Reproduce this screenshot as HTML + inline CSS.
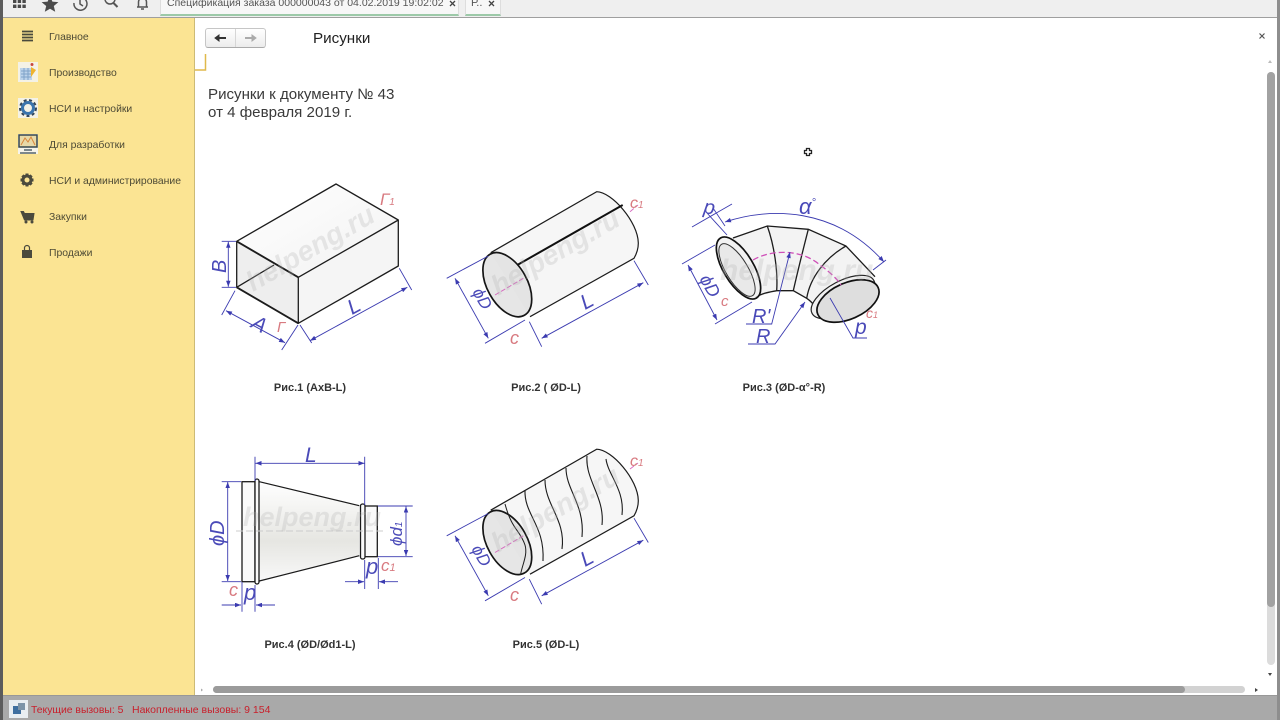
<!DOCTYPE html>
<html lang="ru"><head><meta charset="utf-8"><title>Рисунки</title>
<style>
html,body{margin:0;padding:0;width:1280px;height:720px;overflow:hidden;background:#fff;font-family:"Liberation Sans","Noto Sans CJK SC",sans-serif}
div{position:absolute;box-sizing:border-box}
.t{white-space:nowrap}
.m{left:49px;font-size:10.4px;line-height:14px;color:#4d4a35}
.cap{font-size:11px;font-weight:bold;color:#333;line-height:14px;text-align:center;white-space:nowrap}
svg{position:absolute;left:0;top:0}
</style></head><body>
<div style="left:0;top:0;width:1280px;height:18px;background:#efefef;border-bottom:1px solid #9f9f9f"></div>
<div style="left:3px;top:18px;width:192px;height:677px;background:#fbe493;border-right:1px solid #cdbb76"></div>
<div style="left:160px;top:-2px;width:299px;height:18px;background:#f7f7f7;border-bottom:2px solid #9cc9a8;border-left:1px solid #ddd;border-right:1px solid #ddd"></div>
<div style="left:465px;top:-2px;width:36px;height:18px;background:#f7f7f7;border-bottom:2px solid #9cc9a8;border-left:1px solid #ddd;border-right:1px solid #ddd"></div>
<div class="t" style="left:167px;top:-4px;font-size:10.5px;line-height:14px;color:#555">Спецификация заказа 000000043 от 04.02.2019 19:02:02</div>
<div class="t" style="left:471px;top:-4px;font-size:11px;line-height:14px;color:#555">Р..</div>
<div class="t m" style="top:31px">Главное</div>
<div class="t m" style="top:67px">Производство</div>
<div class="t m" style="top:103px">НСИ и настройки</div>
<div class="t m" style="top:139px">Для разработки</div>
<div class="t m" style="top:175px">НСИ и администрирование</div>
<div class="t m" style="top:211px">Закупки</div>
<div class="t m" style="top:247px">Продажи</div>
<div style="left:204.500px;top:28px;width:61px;height:20px;border:1px solid #c6c6c6;border-bottom-color:#aaa;border-radius:3px;background:linear-gradient(#fff,#ececec)"></div>
<div style="left:235px;top:29px;width:1px;height:18px;background:#d6d6d6"></div>
<div class="t" style="left:313px;top:30px;font-size:15.200px;line-height:18px;color:#222">Рисунки</div>
<div class="t" style="left:208px;top:86px;font-size:15.100px;line-height:18px;color:#3a3a3a">Рисунки к документу № 43<br>от 4 февраля 2019 г.</div>
<div class="cap" style="left:210px;top:381px;width:200px">Рис.1 (АхВ-L)</div>
<div class="cap" style="left:446px;top:381px;width:200px">Рис.2 ( ØD-L)</div>
<div class="cap" style="left:684px;top:381px;width:200px">Рис.3 (ØD-α°-R)</div>
<div class="cap" style="left:210px;top:638px;width:200px">Рис.4 (ØD/Ød1-L)</div>
<div class="cap" style="left:446px;top:638px;width:200px">Рис.5 (ØD-L)</div>
<div style="left:0;top:695px;width:1280px;height:25px;background:#a9a9a9;border-top:1px solid #989898"></div>
<div style="left:0;top:0;width:3px;height:720px;background:#5c5c5c"></div>
<div style="left:1277px;top:0;width:3px;height:720px;background:#8e8e8e"></div>
<div class="t" style="left:31px;top:704px;font-size:10.400px;line-height:14px;color:#c8202c">Текущие вызовы: 5</div>
<div class="t" style="left:132px;top:703px;font-size:10.500px;line-height:14px;color:#c8202c">Накопленные вызовы: 9 154</div>
<div style="left:213px;top:686px;width:1032px;height:7px;border-radius:4px;background:#d2d2d2"></div>
<div style="left:213px;top:686px;width:972px;height:7px;border-radius:4px;background:#9b9b9b"></div>
<div style="left:1267px;top:72px;width:8px;height:593px;border-radius:4px;background:#dcdcdc"></div>
<div style="left:1267px;top:72px;width:8px;height:535px;border-radius:4px;background:#a2a2a2"></div>

<svg width="1280" height="720" viewBox="0 0 1280 720" font-family="Liberation Sans, sans-serif">
<defs>
<linearGradient id="g1" x1="0" y1="0" x2="1" y2="1"><stop offset="0" stop-color="#fff"/><stop offset="1" stop-color="#e9e9e9"/></linearGradient>
<linearGradient id="g4" x1="0" y1="0" x2="0" y2="1"><stop offset="0" stop-color="#fff"/><stop offset=".6" stop-color="#e6e6e2"/><stop offset="1" stop-color="#f8f8f8"/></linearGradient>
<marker id="a" viewBox="0 0 8 6" refX="8" refY="3" markerWidth="7" markerHeight="5" orient="auto-start-reverse"><path d="M0 0L8 3L0 6z" fill="#3b3bb0"/></marker>
</defs>

<!-- top bar icons -->
<g fill="#4b4b4b">
<g><rect x="13" y="0" width="3.400" height="3"/><rect x="17.700" y="0" width="3.400" height="3"/><rect x="22.400" y="0" width="3.400" height="3"/><rect x="13" y="4.600" width="3.400" height="3.400"/><rect x="17.700" y="4.600" width="3.400" height="3.400"/><rect x="22.400" y="4.600" width="3.400" height="3.400"/></g>
<path d="M50-3l2.400 5.600 6 .5-4.600 3.900 1.400 5.800-5.200-3.100-5.200 3.100 1.400-5.800-4.600-3.900 6-.5z" transform="translate(0 -1)"/>
</g>
<g fill="none" stroke="#555" stroke-width="1.500">
<path d="M74 3a6.500 6.500 0 1 0 2-4M80 0v4l3 2"/>
<circle cx="110" cy="-1" r="5"/><path d="M113.500 3l4 4" stroke-width="2"/>
<path d="M137 7h11M138.500 7v-5a4 4 0 0 1 8 0v5M141 9h3"/>
<path d="M450 1l5 5M455 1l-5 5M489 1l5 5M494 1l-5 5" stroke="#444" stroke-width="1.300"/>
</g>

<!-- sidebar icons -->
<path d="M22 31.500h11M22 34.500h11M22 37.500h11M22 40.500h11" stroke="#4a4a3c" stroke-width="1.800"/>
<rect x="18" y="62" width="20" height="20" fill="#f4f2e6"/>
<path d="M20 68h12v12H20z" fill="#bcd3ea"/>
<path d="M21 71h10M21 74h10M21 77h10M24 68v12M28 68v12" stroke="#7fa3c9"/>
<path d="M31 67l5 3-5 7z" fill="#eeb32e"/><circle cx="32" cy="64.500" r="1.500" fill="#c8473d"/>
<rect x="18" y="98" width="20" height="20" fill="#f4f2e6"/>
<circle cx="28" cy="108" r="5.500" fill="none" stroke="#3a74ad" stroke-width="3"/>
<circle cx="28" cy="108" r="8" fill="none" stroke="#34465a" stroke-width="2" stroke-dasharray="3 2.500"/>
<rect x="18" y="134" width="20" height="20" fill="#f6f4ea"/>
<rect x="19" y="135" width="18" height="12" fill="#e8d9a8" stroke="#37474f" stroke-width="1.500"/>
<path d="M21 145l4-7 3 4 3-5 4 8" fill="none" stroke="#d9863a"/>
<path d="M24 150h8M20 153h16" stroke="#55656d" stroke-width="1.500"/>
<g transform="translate(27 180)" fill="#4b4a3d">
<circle r="4" fill="none" stroke="#4b4a3d" stroke-width="3"/>
<path d="M-1.500-6.500h3v3h-3zM-1.500 3.500h3v3h-3zM-6.500-1.500h3v3h-3zM3.500-1.500h3v3h-3z"/>
<path d="M-1.500-6.500h3v3h-3zM-1.500 3.500h3v3h-3zM-6.500-1.500h3v3h-3zM3.500-1.500h3v3h-3z" transform="rotate(45)"/>
</g>
<path d="M21 211.500h2.500l1 2h9.500l-1 6.500h-8.500z" fill="#4b4a3d" stroke="#4b4a3d"/>
<circle cx="26" cy="222" r="1.500" fill="#4b4a3d"/><circle cx="32" cy="222" r="1.500" fill="#4b4a3d"/>
<path d="M22 250h10v8H22z" fill="#4b4a3d"/><path d="M24.500 250v-2a2.500 2.500 0 0 1 5 0v2" fill="none" stroke="#4b4a3d" stroke-width="1.200"/>

<!-- corner -->
<path d="M205.500 54v16H195" fill="none" stroke="#e0b94c" stroke-width="1.500"/>
<!-- nav arrows -->
<path d="M218 38h8" stroke="#333" stroke-width="2"/><path d="M219 35l-4 3 4 3z" fill="#333" stroke="#333"/>
<path d="M245 38h8" stroke="#aaa" stroke-width="2"/><path d="M252 35l4 3-4 3z" fill="#aaa" stroke="#aaa"/>
<path d="M1259.500 33.500l5 5M1264.500 33.500l-5 5" stroke="#555" stroke-width="1.200"/>
<!-- cursor -->
<path d="M806.500 148.500h3v2h2v3h-2v2h-3v-2h-2v-3h2z" fill="#fff" stroke="#222" stroke-width="1.300"/>

<!-- scroll arrows -->
<path d="M1270 60l2 3h-4z" fill="#bbb"/><path d="M1268 673h4l-2 3z" fill="#444"/><path d="M203 690l-2-1.500v3z" fill="#aaa"/><path d="M1258 690l-3-2v4z" fill="#444"/>
<!-- status icon -->
<rect x="9" y="700" width="19" height="18" fill="#e9eef2"/>
<rect x="13" y="706" width="8" height="8" fill="#3f6f9f"/><rect x="18" y="703" width="7" height="7" fill="#7d94a8"/>

<g style="filter:blur(.35px)">
<!-- FIG 1 -->
<path d="M236.700 241.300L298.300 277.300V323.300L236.700 287.300z" fill="#e8e8e8" fill-opacity=".75"/>
<path d="M236.700 241.300L336 184 398.300 220 298.300 277.300z" fill="url(#g1)" fill-opacity=".6"/>
<path d="M298.300 277.300L398.300 220V266L298.300 323.300z" fill="#f1f1f1" fill-opacity=".7"/>
<g fill="none" stroke="#1c1c1c" stroke-width="1.300" stroke-linejoin="round">
<path d="M236.700 241.300L336 184 398.300 220V266L298.300 323.300 236.700 287.300zM298.300 277.300V323.300M398.300 220L298.300 277.300M236.700 287.300L274 265"/>
<path d="M236.700 241.300L298.300 277.300M236.700 287.300L298.300 323.300" stroke-width="1.800"/>
</g>
<g fill="none" stroke="#3b3bb0" stroke-width=".9">
<path d="M228.300 241.800V286.800" marker-start="url(#a)" marker-end="url(#a)"/>
<path d="M221.700 241.300H236M221.700 287.300H236M235 290.700L221.700 315M298 325L281.700 350M300 325L311.700 343M399.300 268.300L411.700 290"/>
<path d="M226 310.700L285 342.700" marker-start="url(#a)" marker-end="url(#a)"/>
<path d="M310 340.700L407.300 287.300" marker-start="url(#a)" marker-end="url(#a)"/>
</g>
<g font-style="italic" font-size="21" fill="#4a4ab8">
<text transform="translate(226 273) rotate(-90)" font-size="20">B</text>
<text transform="translate(250 327) rotate(28)">A</text>
<text transform="translate(352 315) rotate(-28)">L</text>
</g>
<g font-style="italic" fill="#d87a80"><text x="277" y="332" font-size="15">Г</text><text x="380" y="205" font-size="17">Г<tspan font-size="10">1</tspan></text></g>

<!-- FIG 2 -->
<g>
<path d="M490.700 252.700L596.700 191.700C612 192 638 222 638.300 243 638.400 249 636.500 254 634 258.300L530 316.700z" fill="#f3f3f3" fill-opacity=".75"/>
<ellipse cx="507.300" cy="284.700" rx="35" ry="20" transform="rotate(60.800 507.300 284.700)" fill="#e2e2e2" fill-opacity=".85" stroke="#161616" stroke-width="1.700"/>
<path d="M490.700 252.700L596.700 191.700C612 192 638 222 638.300 243 638.400 249 636.500 254 634 258.300L530 316.700" fill="none" stroke="#1c1c1c" stroke-width="1.200"/>
<path d="M517.300 265L622.700 205" stroke="#111" stroke-width="2"/>
<path d="M495 295L523.300 278.300M630 211.700L638 205" stroke="#d66fc0" stroke-dasharray="5 2" stroke-width="1" fill="none"/>
<g fill="none" stroke="#3b3bb0" stroke-width=".9">
<path d="M446.700 278.300L488.300 256M485 343.300L525 320M529.300 321.700L541.700 346.700M634 260.700L648.300 285"/>
<path d="M455 278.300L488.300 338.300" marker-start="url(#a)" marker-end="url(#a)"/>
<path d="M541.700 338.300L643.300 282.700" marker-start="url(#a)" marker-end="url(#a)"/>
</g>
<g font-style="italic" fill="#4a4ab8">
<text transform="translate(472 292) rotate(60)" font-size="17">ϕD</text>
<text transform="translate(585 310) rotate(-28)" font-size="21">L</text>
</g>
<g font-style="italic" fill="#d87a80"><text x="510" y="344" font-size="18">c</text><text x="630" y="208" font-size="16">c<tspan font-size="10">1</tspan></text></g>
</g>

<!-- FIG 5 -->
<g>
<path d="M490.700 510.200L596.700 449.200C612 449.500 638 479.500 638.300 500.500 638.400 506.500 636.500 511.500 634 515.800L530 574.200z" fill="#f3f3f3" fill-opacity=".75"/>
<g fill="none" stroke="#1c1c1c" stroke-width="1.100">
<path d="M525 490C524 515 545 525 543 561"/>
<path d="M545 480C545 505 566 520 562 549"/>
<path d="M566 468C566 490 585 505 582 537"/>
<path d="M587 456C585 480 605 497 602 525"/>
<path d="M606 459C608 475 625 490 622 515"/>
</g>
<ellipse cx="507.300" cy="542.500" rx="35" ry="20" transform="rotate(60.800 507.300 542.500)" fill="#e2e2e2" fill-opacity=".85" stroke="#161616" stroke-width="1.700"/>
<path d="M505 504C512 530 520 530 525 545 528 555 522 565 520.500 575" fill="none" stroke="#1c1c1c"/>
<path d="M490.700 510.200L596.700 449.200C612 449.500 638 479.500 638.300 500.500 638.400 506.500 636.500 511.500 634 515.800L530 574.200" fill="none" stroke="#1c1c1c" stroke-width="1.200"/>
<path d="M495 552.500L523.300 535.800M630 469L638 463" stroke="#d66fc0" stroke-dasharray="5 2" fill="none"/>
<g fill="none" stroke="#3b3bb0" stroke-width=".9">
<path d="M446.700 535.800L488.300 513.500M485 600.800L525 577.500M529.300 579.200L541.700 604.200M634 518.200L648.300 542.500"/>
<path d="M455 535.800L488.300 595.800" marker-start="url(#a)" marker-end="url(#a)"/>
<path d="M541.700 595.800L643.300 540.200" marker-start="url(#a)" marker-end="url(#a)"/>
</g>
<g font-style="italic" fill="#4a4ab8">
<text transform="translate(471 549) rotate(60)" font-size="17">ϕD</text>
<text transform="translate(585 567) rotate(-28)" font-size="21">L</text>
</g>
<g font-style="italic" fill="#d87a80"><text x="510" y="601" font-size="18">c</text><text x="630" y="466" font-size="16">c<tspan font-size="10">1</tspan></text></g>
</g>

<!-- FIG 3 -->
<g>
<path d="M730 238L767.300 226 808.300 229.300 846 246 875 276.700 848 320 816.700 311.700 806.700 298.300 793.300 290.700 776.700 290.700 756 297.300z" fill="#efefef" fill-opacity=".75"/>
<g fill="none" stroke="#1c1c1c" stroke-width="1.300">
<path d="M733 238L767.300 226 808.300 229.300 846 246 875 276.700"/>
<path d="M756 297.300C762 293 770 292 776.700 290.700L793.300 290.700 806.700 298.300C812 302 816 306 816.700 314"/>
<path d="M767.300 226C774 245 778 270 776.700 290.700M808.300 229.300C803 250 798 270 793.300 290.700M846 246C825 258 810 278 806.700 298.300"/>
</g>
<ellipse cx="738.500" cy="268" rx="35" ry="15" transform="rotate(59 738.500 268)" fill="#f0f0f0" fill-opacity=".8" stroke="#111" stroke-width="1.700"/>
<ellipse cx="737" cy="270" rx="30" ry="11" transform="rotate(59 737 270)" fill="#e6e6e6" fill-opacity=".7" stroke="#333" stroke-width="1"/>
<ellipse cx="843" cy="297" rx="35" ry="16" transform="rotate(-28 843 297)" fill="#f0f0f0" stroke="#222" stroke-width="1.200"/>
<ellipse cx="848" cy="301" rx="33" ry="18" transform="rotate(-24 848 301)" fill="#dedede" stroke="#111" stroke-width="1.700"/>
<path d="M753 260C770 250 800 248 820 265 830 272 838 280 841 285" fill="none" stroke="#cf4fb8" stroke-width="1.300" stroke-dasharray="6 3"/>
<g fill="none" stroke="#3b3bb0" stroke-width=".9">
<path d="M725 222C770 207 835 207 884 262" marker-start="url(#a)" marker-end="url(#a)"/>
<path d="M707 213L727 235M713 208L725 226M692 227L732 204M873 270L886 260"/>
<path d="M682 264L715 245M715 324L752 302"/>
<path d="M688 265L717 320" marker-start="url(#a)" marker-end="url(#a)"/>
<path d="M746 324H771.700L790 252" marker-end="url(#a)"/>
<path d="M748 344H775L805 302" marker-end="url(#a)"/>
<path d="M830 298L853 338H867"/>
</g>
<g font-style="italic" fill="#4a4ab8">
<text transform="translate(703 213) rotate(8)" font-size="20">p</text>
<text x="799" y="214" font-size="22">α<tspan font-size="11" dy="-8">°</tspan></text>
<text transform="translate(699 279) rotate(60)" font-size="18">ϕD</text>
<text x="752" y="323" font-size="20">R'</text>
<text x="756" y="343" font-size="20">R</text>
<text x="855" y="334" font-size="21">p</text>
</g>
<g font-style="italic" fill="#d87a80"><text x="721" y="306" font-size="15">c</text><text x="866" y="318" font-size="14">c<tspan font-size="9">1</tspan></text></g>
</g>

<!-- FIG 4 -->
<g>
<path d="M259.300 481.700L359.300 505.700V555.700L259.300 581z" fill="url(#g4)"/>
<g fill="#fafafa" stroke="#1a1a1a" stroke-width="1.300">
<rect x="242" y="481.700" width="13" height="100"/>
<rect x="364.700" y="506" width="12.600" height="50.700"/>
<rect x="255" y="479" width="4" height="105" rx="2"/>
<rect x="360.500" y="504" width="4.500" height="55" rx="2"/>
</g>
<path d="M259.300 481.700L359.300 505.700M259.300 581L359.300 555.700" stroke="#1a1a1a" stroke-width="1.200" fill="none"/>
<path d="M236 531H385" stroke="#ccc" stroke-dasharray="7 3" fill="none"/>
<g fill="none" stroke="#3b3bb0" stroke-width=".9">
<path d="M255 456.700V481M364.700 456.700V505M221.700 481.700H241M221.700 581.700H241M378 506H412.700M378 556.700H412.700"/>
<path d="M255.500 463.300H364.500" marker-start="url(#a)" marker-end="url(#a)"/>
<path d="M227.700 482V581" marker-start="url(#a)" marker-end="url(#a)"/>
<path d="M406 506.500V556" marker-start="url(#a)" marker-end="url(#a)"/>
<path d="M242 582V611.700M255 585V611.700M364.700 560V589M378.300 558V589"/>
<path d="M221.700 605H241" marker-end="url(#a)"/><path d="M275 605H256" marker-end="url(#a)"/>
<path d="M345 581.700H364" marker-end="url(#a)"/><path d="M398 581.700H379" marker-end="url(#a)"/>
</g>
<g font-style="italic" fill="#4a4ab8">
<text x="305" y="462" font-size="21">L</text>
<text transform="translate(224 546) rotate(-90)" font-size="20">ϕD</text>
<text transform="translate(402 546) rotate(-90)" font-size="17">ϕd<tspan font-size="10">1</tspan></text>
<text x="244" y="600" font-size="22">p</text>
<text x="366" y="574" font-size="22">p</text>
</g>
<g font-style="italic" fill="#d87a80"><text x="229" y="596" font-size="18">c</text><text x="381" y="571" font-size="17">c<tspan font-size="11">1</tspan></text></g>
</g>

<!-- watermarks -->
<g fill="#b5b5b5" fill-opacity=".28" font-weight="bold" font-style="italic">
<text transform="translate(253 292) rotate(-30)" font-size="28">helpeng.ru</text>
<text transform="translate(498 296) rotate(-30)" font-size="28">helpeng.ru</text>
<text x="720" y="280" font-size="30">helpeng.ru</text>
<text x="243" y="526" font-size="27">helpeng.ru</text>
<text transform="translate(498 553) rotate(-30)" font-size="28">helpeng.ru</text>
</g>
</g>
</svg>
</body></html>
